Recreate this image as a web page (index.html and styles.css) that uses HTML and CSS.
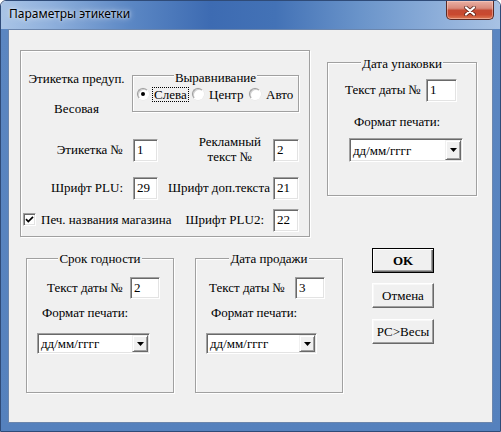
FILE: index.html
```html
<!DOCTYPE html>
<html lang="ru">
<head>
<meta charset="utf-8">
<title>Параметры этикетки</title>
<link rel="stylesheet" href="styles.css">
</head>
<body>
<div class="window">
  <div class="titlebar">
    <div class="title">Параметры этикетки</div>
    <div class="close">
      <svg width="12" height="10" viewBox="0 0 12 10">
        <path d="M2 1.5 L10 8.5 M10 1.5 L2 8.5" stroke="#4a1d17" stroke-width="3.8" stroke-linecap="round" fill="none" opacity="0.75"/>
        <path d="M2 1.5 L10 8.5 M10 1.5 L2 8.5" stroke="#ffffff" stroke-width="2.2" stroke-linecap="round" fill="none"/>
      </svg>
    </div>
  </div>
  <div class="client">
    <div class="top-row">
      <div class="group main-group">
        <div class="row-a">
          <div class="label-col">
            <div>Этикетка предуп.</div>
            <div class="weight">Весовая</div>
          </div>
          <div class="group align-group">
            <div class="legend">Выравнивание</div>
            <div class="radios">
              <div class="radio-item r1"><span class="radio checked"></span><span class="rl focus">Слева</span></div>
              <div class="radio-item r2"><span class="radio"></span><span class="rl">Центр</span></div>
              <div class="radio-item r3"><span class="radio"></span><span class="rl">Авто</span></div>
            </div>
          </div>
        </div>
        <div class="row row-b">
          <div class="lab1">Этикетка №</div>
          <div class="edit e-left">1</div>
          <div class="lab3 promo">Рекламный<br>текст №</div>
          <div class="edit e-right">2</div>
        </div>
        <div class="row row-c">
          <div class="lab1">Шрифт PLU:</div>
          <div class="edit e-left">29</div>
          <div class="lab3 extra">Шрифт доп.текста</div>
          <div class="edit e-right">21</div>
        </div>
        <div class="row row-d">
          <span class="check">
            <svg width="9" height="9" viewBox="0 0 9 9"><path d="M1 4.2 L3.3 6.6 L8 1.8" stroke="#000" stroke-width="1.7" fill="none"/></svg>
          </span>
          <div class="check-label">Печ. названия магазина</div>
          <div class="lab3 plu2">Шрифт PLU2:</div>
          <div class="edit e-right">22</div>
        </div>
      </div>
      <div class="group pack-group">
        <div class="legend">Дата упаковки</div>
        <div class="date-row"><span>Текст даты №</span><div class="edit e-date">1</div></div>
        <div class="fmt">Формат печати:</div>
        <div class="combo"><span>дд/мм/гггг</span><div class="drop"><svg width="7" height="4" viewBox="0 0 7 4"><path d="M0 0 H7 L3.5 4 Z" fill="#000"/></svg></div></div>
      </div>
    </div>
    <div class="bottom-row">
      <div class="group date-group g1">
        <div class="legend">Срок годности</div>
        <div class="date-row"><span>Текст даты №</span><div class="edit e-date">2</div></div>
        <div class="fmt">Формат печати:</div>
        <div class="combo"><span>дд/мм/гггг</span><div class="drop"><svg width="7" height="4" viewBox="0 0 7 4"><path d="M0 0 H7 L3.5 4 Z" fill="#000"/></svg></div></div>
      </div>
      <div class="group date-group g2">
        <div class="legend">Дата продажи</div>
        <div class="date-row"><span>Текст даты №</span><div class="edit e-date">3</div></div>
        <div class="fmt">Формат печати:</div>
        <div class="combo"><span>дд/мм/гггг</span><div class="drop"><svg width="7" height="4" viewBox="0 0 7 4"><path d="M0 0 H7 L3.5 4 Z" fill="#000"/></svg></div></div>
      </div>
      <div class="buttons">
        <div class="btn default">OK</div>
        <div class="btn cancel">Отмена</div>
        <div class="btn send">PC&gt;Весы</div>
      </div>
    </div>
  </div>
</div>
</body>
</html>
```

FILE: styles.css
```css
html, body {
  margin: 0;
  padding: 0;
  background: #ffffff;
}
body {
  width: 501px;
  height: 432px;
  overflow: hidden;
}
.window {
  width: 501px;
  height: 432px;
  box-sizing: border-box;
  border: 1px solid #2f4b78;
  border-radius: 6px 6px 0 0;
  background: linear-gradient(180deg, rgba(0,0,0,0) 0, rgba(0,0,0,0) 28px, #5b86c1 28px, #5581bd 100%);
  display: flex;
  flex-direction: column;
  overflow: hidden;
}
.titlebar {
  height: 28px;
  flex: none;
  display: flex;
  align-items: flex-start;
  background: linear-gradient(90deg, #a9c4e6 0%, #8fb0dc 10%, #5b87c4 26%, #3d6bb2 42%, #4372b6 55%, #6a94ca 72%, #8eafda 88%, #a8c2e4 100%);
  border-radius: 5px 5px 0 0;
}
.title {
  margin: 5px 0 0 8px;
  font-family: "Noto Sans", "Open Sans", sans-serif;
  font-size: 12px;
  line-height: 16px;
  color: #000;
  text-shadow: 0 0 6px rgba(255,255,255,0.85), 0 0 3px rgba(255,255,255,0.6);
}
.close {
  margin-left: auto;
  margin-right: 6px;
  width: 48px;
  height: 19px;
  box-sizing: border-box;
  border: 1px solid #5a2a24;
  border-top: none;
  border-radius: 0 0 5px 5px;
  background: linear-gradient(180deg, #eab0a4 0%, #d98a7b 40%, #c44a33 52%, #c9492f 75%, #dc7a55 100%);
  box-shadow: inset 0 0 0 1px rgba(255,220,210,0.45);
  display: flex;
  align-items: center;
  justify-content: center;
  padding-top: 1px;
}
.client {
  flex: none;
  width: 485px;
  height: 394px;
  margin: 0 0 0 7px;
  box-sizing: border-box;
  border: 1px solid #6b86ad;
  background: #f0f0f0;
  padding: 20px 0 0 11px;
  font-family: "Times New Roman", "Liberation Serif", Tinos, "DejaVu Serif", serif;
  font-size: 13px;
  line-height: 15px;
  color: #000;
}

/* group boxes */
.group {
  box-sizing: border-box;
  border: 1px solid #a0a0a0;
  box-shadow: 1px 1px 0 #ffffff, inset 1px 1px 0 #ffffff;
}
.legend {
  display: table;
  margin: -7px auto 0;
  padding: 0 1px;
  background: #f0f0f0;
  line-height: 15px;
}

.top-row {
  display: flex;
  align-items: flex-start;
}
.main-group {
  width: 290px;
  height: 187px;
}
.row-a {
  display: flex;
  align-items: flex-start;
  margin-top: 20px;
}
.label-col {
  width: 111px;
  text-align: center;
}
.weight {
  margin-top: 15px;
}
.align-group {
  margin-top: 4px;
  width: 167px;
  height: 37px;
}
.align-group .legend {
  margin-top: -6px;
}
.radios {
  display: flex;
  margin-top: 2px;
  padding-left: 3px;
}
.radio-item {
  display: flex;
  align-items: flex-start;
}
.r1 { width: 55px; }
.r2 { width: 57px; }
.radio {
  width: 12px;
  height: 12px;
  box-sizing: border-box;
  margin-top: 1px;
  margin-left: 1px;
  border-radius: 50%;
  border: 1px solid;
  border-color: #9c9c9c #ffffff #ffffff #9c9c9c;
  background: #ffffff;
  box-shadow: inset 1px 1px 0 #d0d0d0, 0 0 0 0.5px #e6e6e6;
  display: flex;
  align-items: center;
  justify-content: center;
}
.radio.checked::after {
  content: "";
  width: 4px;
  height: 4px;
  border-radius: 50%;
  background: #000;
}
.rl {
  margin-left: 3px;
  padding: 0 1px;
  border: 1px solid transparent;
  line-height: 13px;
}
.rl.focus {
  border: 1px dotted #000;
}

.row {
  display: flex;
  align-items: baseline;
  padding-right: 10px;
}
.row-b { margin-top: 23px; }
.row-c { margin-top: 15px; }
.row-d { margin-top: 9px; }
.lab1 {
  width: 102px;
  text-align: right;
  white-space: nowrap;
}
.lab3 {
  margin-left: auto;
  white-space: nowrap;
}
.promo {
  align-self: flex-start;
  margin-top: -5px;
  margin-bottom: -5px;
  margin-right: 12px;
  text-align: center;
}
.extra { margin-right: 3px; }
.plu2 { margin-right: 9px; }

.edit {
  box-sizing: border-box;
  height: 23px;
  padding: 2px 0 0 3px;
  line-height: 15px;
  background: #ffffff;
  border: 1px solid;
  border-color: #a0a0a0 #ffffff #ffffff #a0a0a0;
  box-shadow: inset 1px 1px 0 #696969, inset -1px -1px 0 #e3e3e3;
}
.e-left {
  width: 25px;
  margin-left: 10px;
}
.e-right {
  width: 26px;
}
.e-date {
  width: 30px;
  height: 22px;
}

.check {
  align-self: flex-start;
  margin-top: 4px;
  margin-left: 2px;
  width: 13px;
  height: 13px;
  box-sizing: border-box;
  border: 1px solid;
  border-color: #a0a0a0 #ffffff #ffffff #a0a0a0;
  box-shadow: inset 1px 1px 0 #696969, inset -1px -1px 0 #e3e3e3;
  background: #ffffff;
  display: flex;
  align-items: center;
  justify-content: center;
}
.check-label {
  margin-left: 5px;
  white-space: nowrap;
}

/* date groups */
.pack-group {
  margin-left: 17px;
  margin-top: 12px;
  width: 150px;
  height: 134px;
}
.date-row {
  display: flex;
  align-items: baseline;
  white-space: nowrap;
}
.pack-group .date-row {
  margin-top: 8px;
  padding-left: 17px;
  gap: 5px;
}
.pack-group .e-date {
  width: 31px;
  height: 23px;
}
.fmt {
  white-space: nowrap;
}
.pack-group .fmt {
  margin-top: 12px;
  padding-left: 26px;
}
.combo {
  box-sizing: border-box;
  display: flex;
  align-items: center;
  justify-content: space-between;
  background: #ffffff;
  border: 1px solid;
  border-color: #a0a0a0 #ffffff #ffffff #a0a0a0;
  box-shadow: inset 1px 1px 0 #696969, inset -1px -1px 0 #e3e3e3;
  padding: 1px 1px 1px 3px;
  white-space: nowrap;
}
.pack-group .combo {
  margin-top: 9px;
  margin-left: 21px;
  width: 114px;
  height: 24px;
}
.drop {
  box-sizing: border-box;
  width: 16px;
  height: 100%;
  background: #f0f0f0;
  border: 1px solid;
  border-color: #f0f0f0 #696969 #696969 #f0f0f0;
  box-shadow: inset 1px 1px 0 #ffffff, inset -1px -1px 0 #a0a0a0;
  display: flex;
  align-items: center;
  justify-content: center;
}

.bottom-row {
  display: flex;
  align-items: flex-start;
  margin-top: 11px;
  margin-left: 6px;
}
.date-group {
  margin-top: 10px;
  width: 148px;
  height: 135px;
}
.date-group .legend {
  margin-top: -8px;
}
.date-group .date-row {
  margin-top: 11px;
}
.date-group .fmt {
  margin-top: 6px;
  padding-left: 15px;
}
.date-group .combo {
  margin-top: 13px;
  margin-left: 10px;
  height: 21px;
}
.g1 .date-row {
  padding-left: 20px;
  gap: 7px;
}
.g1 .combo { width: 113px; }
.g2 {
  margin-left: 21px;
}
.g2 .date-row {
  padding-left: 13px;
  gap: 10px;
}
.g2 .combo { width: 111px; }

.buttons {
  margin-left: 29px;
  display: flex;
  flex-direction: column;
}
.btn {
  box-sizing: border-box;
  width: 62px;
  height: 25px;
  line-height: 23px;
  text-align: center;
  background: #f0f0f0;
  border: 1px solid;
  border-color: #ffffff #696969 #696969 #ffffff;
  box-shadow: inset -1px -1px 0 #a0a0a0, inset 1px 1px 0 #f8f8f8;
}
.btn.default {
  border: 1px solid #000000;
  box-shadow: inset 1px 1px 0 #ffffff, inset -1px -1px 0 #696969, inset -2px -2px 0 #a0a0a0;
  font-weight: bold;
}
.cancel { margin-top: 10px; }
.send { margin-top: 11px; }
```
